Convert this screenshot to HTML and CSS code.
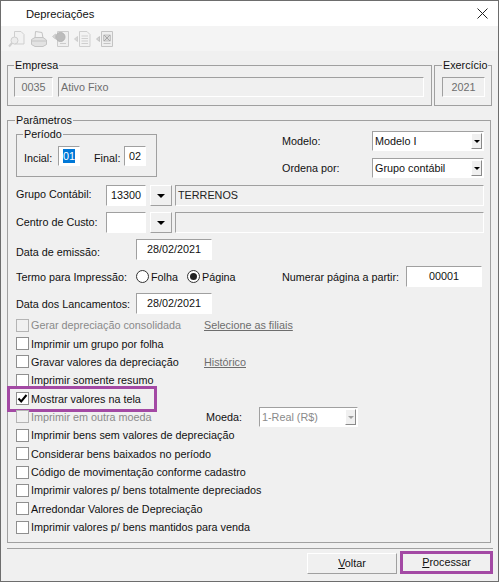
FILE: index.html
```html
<!DOCTYPE html>
<html lang="pt-BR">
<head>
  <meta charset="UTF-8">
  <title>Depreciações</title>
  <link rel="stylesheet" href="styles.css">
</head>
<body>
  <div class="window">
    <div class="titlebar">
      <span class="title">Depreciações</span>
      <svg class="close" width="11" height="11" viewBox="0 0 11 11"><path d="M0.5 0.5L10.5 10.5M10.5 0.5L0.5 10.5" stroke="#222" stroke-width="1" fill="none"/></svg>
    </div>

    <div class="toolbar">
      <svg class="tool" width="18" height="18" viewBox="0 0 18 18" fill="#f2f2f2" stroke="#cfcfcf"><path d="M6.5 1.5H13L16 4.5V14H6.5Z"/><circle cx="6.5" cy="10.5" r="3.5" fill="#ececec"/><path d="M4 13L1 16.5" stroke-width="2"/></svg>
      <svg class="tool" width="18" height="18" viewBox="0 0 18 18" fill="#e2e2e2" stroke="#c4c4c4"><path d="M5.5 1.5L12 2.5L13 8H5Z" fill="#f4f4f4"/><path d="M1.5 9.5L5 7.5H13L16.5 10V14.5L13 16.5H5L1.5 14.5Z"/><path d="M2 11H16"/></svg>
      <svg class="tool" width="18" height="18" viewBox="0 0 18 18" fill="#efefef" stroke="#cccccc"><path d="M5.5 1.5H16.5V16.5H5.5Z"/><path d="M0.5 6.5L3.5 4V9Z" fill="#d4d4d4"/><circle cx="8.5" cy="7" r="4.5" fill="#bcbcbc" stroke="#b4b4b4"/><path d="M8 13.5H14"/></svg>
      <svg class="tool" width="18" height="18" viewBox="0 0 18 18" fill="#f2f2f2" stroke="#cfcfcf"><path d="M5.5 1.5H13L16 4.5V16.5H5.5Z"/><path d="M0.5 9L3.5 6.5V11.5Z" fill="#d8d8d8"/><path d="M7.5 6H14M7.5 8.5H14M7.5 11H14M7.5 13.5H14"/></svg>
      <svg class="tool" width="18" height="18" viewBox="0 0 18 18" fill="#efefef" stroke="#c4c4c4"><path d="M5.5 1.5H16.5V16.5H5.5Z"/><path d="M0.5 9L3.5 6.5V11.5Z" fill="#d4d4d4"/><path d="M7.5 5H14.5V11H7.5Z" fill="#dadada"/><path d="M8 5L14 11M14 5L8 11" stroke="#a8a8a8"/><path d="M7.5 13.5H14.5"/></svg>
    </div>

    <div class="content">
      <div class="top-groups">
        <fieldset class="group empresa">
          <legend>Empresa</legend>
          <div class="field-row">
            <div class="field readonly code">0035</div>
            <div class="field readonly grow">Ativo Fixo</div>
          </div>
        </fieldset>
        <fieldset class="group exercicio">
          <legend>Exercício</legend>
          <div class="field readonly center">2021</div>
        </fieldset>
      </div>

      <fieldset class="group parametros">
        <legend>Parâmetros</legend>

        <div class="first-row">
          <fieldset class="group periodo">
            <legend>Período</legend>
            <div class="periodo-row">
              <span class="lbl-inicial">Incial:</span>
              <div class="field white small center"><span class="selected">01</span></div>
              <span class="lbl-final">Final:</span>
              <div class="field white small center">02</div>
            </div>
          </fieldset>
          <div class="selects">
            <div class="select-row">
              <span class="select-label">Modelo:</span>
              <div class="select">Modelo I<span class="arrow"></span></div>
            </div>
            <div class="select-row">
              <span class="select-label">Ordena por:</span>
              <div class="select">Grupo contábil<span class="arrow"></span></div>
            </div>
          </div>
        </div>

        <div class="form-rows">
          <div class="form-row">
            <span class="lbl-short lift-2">Grupo Contábil:</span>
            <div class="field white lookup">13300</div>
            <div class="drop-btn"></div>
            <div class="field readonly dark grow">TERRENOS</div>
          </div>
          <div class="form-row">
            <span class="lbl-short lift-1">Centro de Custo:</span>
            <div class="field white lookup"></div>
            <div class="drop-btn"></div>
            <div class="field readonly grow"></div>
          </div>
          <div class="form-row">
            <span class="lbl-long drop-2">Data de emissão:</span>
            <div class="field white date">28/02/2021</div>
          </div>
          <div class="form-row">
            <span class="lbl-long">Termo para Impressão:</span>
            <div class="radios">
              <span class="radio"></span><span class="radio-text first">Folha</span>
              <span class="radio on"></span><span class="radio-text">Página</span>
            </div>
            <span class="lbl-numerar">Numerar página a partir:</span>
            <div class="field white date">00001</div>
          </div>
          <div class="form-row">
            <span class="lbl-long">Data dos Lancamentos:</span>
            <div class="field white date">28/02/2021</div>
          </div>
        </div>

        <div class="checks">
          <div class="check-row disabled"><span class="box"></span><span class="check-text">Gerar depreciação consolidada</span><span class="link">Selecione as filiais</span></div>
          <div class="check-row"><span class="box"></span><span class="check-text">Imprimir um grupo por folha</span></div>
          <div class="check-row"><span class="box"></span><span class="check-text">Gravar valores da depreciação</span><span class="link">Histórico</span></div>
          <div class="check-row"><span class="box"></span><span class="check-text">Imprimir somente resumo</span></div>
          <div class="check-row marked">
            <span class="box">
              <svg width="11" height="11" viewBox="0 0 11 11"><path d="M1.5 5.5L4.2 8.5L9.5 2" stroke="#000" stroke-width="2" fill="none"/></svg>
            </span>
            <span class="check-text">Mostrar valores na tela</span>
          </div>
          <div class="check-row disabled">
            <span class="box"></span><span class="check-text short">Imprimir em outra moeda</span>
            <span class="moeda-label">Moeda:</span>
            <div class="select moeda">1-Real (R$)<span class="arrow"></span></div>
          </div>
          <div class="check-row"><span class="box"></span><span class="check-text">Imprimir bens sem valores de depreciação</span></div>
          <div class="check-row"><span class="box"></span><span class="check-text">Considerar bens baixados no período</span></div>
          <div class="check-row"><span class="box"></span><span class="check-text">Código de movimentação conforme cadastro</span></div>
          <div class="check-row"><span class="box"></span><span class="check-text">Imprimir valores p/ bens totalmente depreciados</span></div>
          <div class="check-row"><span class="box"></span><span class="check-text">Arredondar Valores de Depreciação</span></div>
          <div class="check-row"><span class="box"></span><span class="check-text">Imprimir valores p/ bens mantidos para venda</span></div>
        </div>
      </fieldset>

      <div class="footer">
        <div class="btn"><u>V</u>oltar</div>
        <div class="btn primary"><u>P</u>rocessar</div>
      </div>
    </div>
  </div>
</body>
</html>
```

FILE: styles.css
```css
*, *::after {
  box-sizing: border-box;
}

body {
  margin: 0;
  font-family: "Liberation Sans", Arial, sans-serif;
  font-size: 10.8px;
  line-height: 14px;
  color: #111;
  background: #f0f0f0;
  white-space: nowrap;
}

.window {
  width: 499px;
  height: 582px;
  border: 1px solid #6d6d6d;
  background: #f0f0f0;
  overflow: hidden;
}

.titlebar {
  display: flex;
  align-items: center;
  justify-content: space-between;
  height: 25px;
  padding: 0 10px 0 25px;
  background: #fff;
}

.title {
  font-size: 11.2px;
}

.toolbar {
  display: flex;
  align-items: center;
  gap: 4px;
  height: 25px;
  padding-left: 7px;
  background: #f4f4f4;
}

.content {
  padding: 7px 6px 0;
}

.top-groups {
  display: flex;
  gap: 2px;
}

.group {
  margin: 0;
  border: 1px solid #a0a0a0;
  min-width: 0;
}

.group legend {
  padding: 0 1px;
  height: 14px;
}

.empresa {
  width: 425px;
  height: 48px;
  padding: 5px 7px 0 6px;
}

.exercicio {
  width: 58px;
  height: 48px;
  padding: 5px 6px 0 7px;
}

.parametros legend,
.periodo legend {
  margin-left: -1px;
}

.field-row {
  display: flex;
  gap: 5px;
}

.field {
  height: 20px;
  padding: 0 2px;
  line-height: 18px;
  border: 1px solid;
  border-color: #a0a0a0 #fff #fff #a0a0a0;
}

.readonly {
  color: #6d6d6d;
}

.readonly.dark {
  color: #222;
}

.white {
  background: #fff;
}

.grow {
  flex: 1;
}

.center {
  text-align: center;
}

.code {
  width: 39px;
  text-align: center;
}

.parametros {
  width: 484px;
  height: 430px;
  margin-top: 7px;
  padding: 0 6px 0 8px;
}

.first-row {
  display: flex;
  height: 51px;
}

.periodo {
  width: 141px;
  height: 50px;
  padding: 5px 0 0 7px;
}

.periodo-row {
  display: flex;
  align-items: center;
}

.lbl-inicial {
  width: 34px;
  padding-top: 3px;
}

.lbl-final {
  width: 44px;
  padding: 3px 0 0 14px;
}

.small {
  width: 22px;
  padding: 0;
}

.selected {
  background: #0078d7;
  color: #fff;
  padding: 1px 0;
}

.selects {
  display: flex;
  flex-direction: column;
  gap: 7px;
  margin: 4px 0 0 125px;
}

.select-row {
  display: flex;
  align-items: center;
}

.select-label {
  width: 90px;
}

.select {
  position: relative;
  width: 112px;
  height: 20px;
  padding-left: 2px;
  line-height: 18px;
  background: #fff;
  border: 1px solid;
  border-color: #a0a0a0 #fff #fff #a0a0a0;
}

.arrow {
  position: absolute;
  top: 1px;
  right: 1px;
  width: 11px;
  height: 16px;
  background: #f0f0f0;
  border: 1px solid;
  border-color: #fff #8a8a8a #8a8a8a #fff;
}

.arrow::after {
  content: "";
  position: absolute;
  top: 6px;
  left: 2px;
  width: 6px;
  height: 3px;
  border: 3px solid transparent;
  border-top-color: #000;
  border-bottom: 0;
}

.form-rows {
  display: flex;
  flex-direction: column;
  gap: 6px;
  margin-top: 7px;
}

.form-row {
  display: flex;
  align-items: center;
  height: 21px;
}

.form-row .field {
  height: 21px;
  line-height: 19px;
}

.lbl-short {
  width: 90px;
}

.lbl-long {
  width: 120px;
}

.lift-2 {
  margin-bottom: 4px;
}

.lift-1 {
  margin-bottom: 2px;
}

.drop-2 {
  margin-top: 4px;
}

.lookup {
  width: 40px;
  text-align: center;
}

.drop-btn {
  position: relative;
  width: 22px;
  height: 21px;
  margin: 0 3px 0 4px;
  background: #f0f0f0;
  border: 1px solid;
  border-color: #fff #a0a0a0 #a0a0a0 #fff;
}

.drop-btn::after {
  content: "";
  position: absolute;
  top: 8px;
  left: 6px;
  width: 8px;
  height: 4px;
  border: 4px solid transparent;
  border-top-color: #000;
  border-bottom: 0;
}

.date {
  width: 76px;
  text-align: center;
}

.radios {
  display: flex;
  align-items: center;
  width: 146px;
}

.radio {
  position: relative;
  width: 13px;
  height: 13px;
  border: 1px solid #333;
  border-radius: 50%;
  background: #fff;
}

.radio.on::after {
  content: "";
  position: absolute;
  top: 2px;
  left: 2px;
  width: 7px;
  height: 7px;
  border-radius: 50%;
  background: #222;
}

.radio-text {
  margin-left: 2px;
}

.radio-text.first {
  width: 36px;
}

.lbl-numerar {
  width: 124px;
}

.checks {
  margin-top: 2px;
}

.check-row {
  position: relative;
  display: flex;
  align-items: center;
  height: 18.36px;
}

.box {
  display: flex;
  align-items: center;
  justify-content: center;
  width: 13px;
  height: 13px;
  margin-right: 2px;
  background: #fff;
  border: 1px solid #8f8f8f;
}

.check-text {
  width: 173px;
}

.check-text.short {
  width: 175px;
}

.disabled .box {
  background: #f0f0f0;
  border-color: #b4b4b4;
}

.disabled .check-text {
  color: #8a8a8a;
}

.link {
  color: #6d6d6d;
  text-decoration: underline;
}

.marked::after {
  content: "";
  position: absolute;
  top: -3px;
  left: -9px;
  width: 150px;
  height: 26px;
  border: 3px solid #a349a4;
}

.moeda-label {
  width: 53px;
  color: #111;
}

.select.moeda {
  width: 99px;
  color: #8a8a8a;
}

.select.moeda .arrow::after {
  border-top-color: #a0a0a0;
}

.footer {
  display: flex;
  justify-content: flex-end;
  align-items: flex-start;
  gap: 3px;
  height: 33px;
  margin: 5px -1px 0 0;
  padding-top: 2px;
  border-top: 1px solid #a0a0a0;
}

.btn {
  width: 90px;
  height: 21px;
  margin-top: 2px;
  line-height: 19px;
  text-align: center;
  background: #f0f0f0;
  border: 1px solid;
  border-color: #fff #a0a0a0 #a0a0a0 #fff;
}

.btn.primary {
  width: 93px;
  height: 23px;
  margin-top: 0;
  line-height: 17px;
  border: 3px solid #a349a4;
}
```
